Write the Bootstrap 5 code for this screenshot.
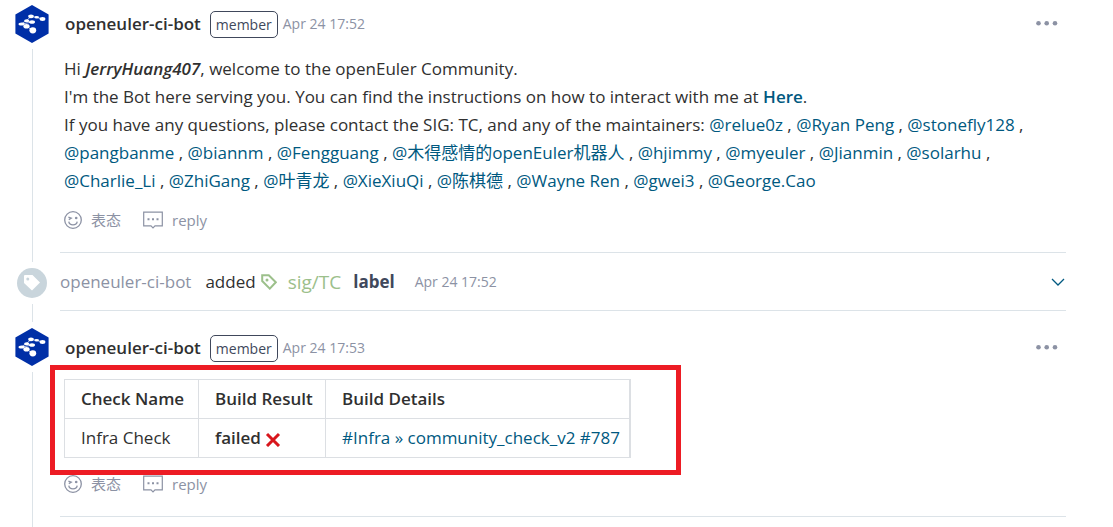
<!DOCTYPE html>
<html lang="en">
<head>
<meta charset="utf-8">
<meta name="viewport" content="width=device-width, initial-scale=1">
<title>Pull request timeline</title>
<link href="https://cdn.jsdelivr.net/npm/bootstrap@5.3.0/dist/css/bootstrap.min.css" rel="stylesheet">
<style>
  :root { --ink: #303030; --slate: #40485b; --muted: #8c92a4; --line: #dce3e8; --link: #005980; }
  body { font-family: "Open Sans", "Noto Sans CJK SC", sans-serif; font-size: 17px; line-height: 28px; color: var(--ink); }
  a { color: var(--link); text-decoration: none; }
  a:hover { text-decoration: underline; }
  .timeline { padding-right: 47px; }
  .rail { width: 60px; padding-left: 4px; gap: 6px; }
  .rail > * { align-self: center; }
  .rail-line { width: 1px; background: var(--line); }
  .rail-lead { height: 11px; }
  .event .rail-lead { height: 9px; }
  .avatar { width: 36px; height: 38px; }
  .event-dot { width: 30px; height: 30px; background: #c9d5dc; color: #fff; }
  .entry { border-bottom: 1px solid var(--line); }
  .comment-body { padding: 23px 0 22px 4px; }
  .comment-first .comment-body { padding-top: 10px; }
  .comment-first .rail { padding-top: 5px; }
  .comment-head { height: 28px; gap: 5px; padding-left: 1px; margin-bottom: 17px; }
  .author { font-weight: 600; color: var(--ink); margin-right: 4px; }
  .role { font-size: 14px; line-height: 25px; padding: 0 5px; border: 1px solid var(--slate); border-radius: 5px; color: var(--slate); }
  .stamp { font-size: 14px; color: var(--muted); }
  .plain-btn { background: none; border: 0; padding: 0; color: var(--muted); font-size: 15px; line-height: 20px; }
  .more-btn { margin-right: 8px; }
  .react-row { gap: 22px; margin-top: 15px; }
  .checked .react-row { margin-top: 16px; }
  .react-row .plain-btn { gap: 9px; }
  .check-wrap { width: fit-content; }
  .check-table { border: 1px solid #dcdfe3; border-right-width: 2px; table-layout: fixed; width: 567px; }
  .check-table th, .check-table td { border: 1px solid #dcdfe3; padding: 5px 0 5px 16px; white-space: nowrap; }
  .check-table th { font-weight: 600; }
  .col-check { width: 134px; }
  .col-result { width: 127px; }
  .highlight-box { position: absolute; inset: -14px -50px -17px -14px; border: 5px solid #ed1c24; pointer-events: none; }
  .event-body { height: 57px; }
  .event-user { color: var(--muted); margin-right: 14px; }
  .event-tag { color: #9cc08b; font-size: 19px; margin: 0 12px 0 5px; gap: 11px; }
  .event strong { color: var(--slate); }
  .event-time { margin-left: 20px; }
</style>
</head>
<body>
<svg class="d-none">
  <symbol id="i-avatar" viewBox="0 0 36 38">
    <path d="M18 0 34.600 9.400V28.600L18 38 1.400 28.600V9.400Z" fill="#002fa7"/>
    <path d="M7 19 12.500 15.500 17 11.500 22.500 12.300 28.500 14M8 19 18 17M12.500 21 18.500 25.500" stroke="#fff" stroke-width=".7" fill="none"/>
    <g fill="#fff"><ellipse cx="17" cy="11.300" rx="2.800" ry="1.900"/><ellipse cx="22.700" cy="12.300" rx="2.300" ry="1.300"/><ellipse cx="28.500" cy="14" rx="2.900" ry="1.900"/><ellipse cx="12.700" cy="15.800" rx="2.600" ry="1.500"/><ellipse cx="7.500" cy="19" rx="3" ry="1.600"/><ellipse cx="18" cy="17" rx="3" ry="1.800"/><ellipse cx="12.500" cy="21.200" rx="3.100" ry="2.300"/><ellipse cx="18.800" cy="25.300" rx="3.400" ry="3.100"/></g>
  </symbol>
  <symbol id="i-smile" viewBox="0 0 18 18">
    <g fill="none" stroke="currentColor" stroke-width="1.300"><circle cx="9" cy="9" r="8.300"/><path d="M4.800 10.600c.6 4.300 7.800 4.300 8.400 0M4.400 6.200 7.200 7.200 4.800 8.600"/></g><circle cx="12.200" cy="7" r="1.300" fill="currentColor"/>
  </symbol>
  <symbol id="i-reply" viewBox="0 0 20 18">
    <path d="M.7 1.200h18.600v13.600H12L10 16.800 8 14.800H.7Z" fill="none" stroke="currentColor" stroke-width="1.200"/><path d="M4.500 7.200h2v2h-2zM9 7.200h2v2H9zM13.500 7.200h2v2h-2z" fill="currentColor"/>
  </symbol>
  <symbol id="i-more" viewBox="0 0 22 6"><g fill="currentColor"><circle cx="2.500" cy="2.300" r="2.300"/><circle cx="10.700" cy="2.300" r="2.300"/><circle cx="19" cy="2.300" r="2.300"/></g></symbol>
</svg>

<main class="timeline">
  <article class="d-flex comment-first">
    <div class="rail d-flex flex-column flex-shrink-0">
      <svg class="avatar flex-shrink-0" role="img" aria-label="openeuler-ci-bot"><use href="#i-avatar"/></svg>
      <div class="rail-line flex-grow-1"></div>
    </div>
    <div class="entry comment-body flex-grow-1">
      <header class="comment-head d-flex align-items-center">
        <a href="#" class="author">openeuler-ci-bot</a>
        <span class="role">member</span>
        <span class="stamp">Apr 24 17:52</span>
        <button class="plain-btn more-btn ms-auto" aria-label="More"><svg class="d-block" width="22" height="6"><use href="#i-more"/></svg></button>
      </header>
      <div class="message">Hi <strong class="fw-semibold fst-italic">JerryHuang407</strong>, welcome to the openEuler Community.<br>
        I'm the Bot here serving you. You can find the instructions on how to interact with me at <a href="#" class="fw-semibold">Here</a>.<br>
        If you have any questions, please contact the SIG: TC, and any of the maintainers: <a href="#">@relue0z</a> , <a href="#">@Ryan Peng</a> , <a href="#">@stonefly128</a> , <a href="#">@pangbanme</a> , <a href="#">@biannm</a> , <a href="#">@Fengguang</a> , <a href="#">@木得感情的openEuler机器人</a> , <a href="#">@hjimmy</a> , <a href="#">@myeuler</a> , <a href="#">@Jianmin</a> , <a href="#">@solarhu</a> , <a href="#">@Charlie_Li</a> , <a href="#">@ZhiGang</a> , <a href="#">@叶青龙</a> , <a href="#">@XieXiuQi</a> , <a href="#">@陈棋德</a> , <a href="#">@Wayne Ren</a> , <a href="#">@gwei3</a> , <a href="#">@George.Cao</a></div>
      <div class="react-row d-flex">
        <button class="plain-btn d-flex align-items-center"><svg width="18" height="18"><use href="#i-smile"/></svg>表态</button>
        <button class="plain-btn d-flex align-items-center"><svg width="20" height="18"><use href="#i-reply"/></svg>reply</button>
      </div>
    </div>
  </article>

  <article class="d-flex event">
    <div class="rail d-flex flex-column flex-shrink-0">
      <div class="rail-line rail-lead"></div>
      <div class="event-dot rounded-circle d-flex align-items-center justify-content-center"><svg width="18" height="18" viewBox="0 0 18 18"><path fill="currentColor" fill-rule="evenodd" d="M2 1h7.500l7.500 7.500-8 8L1 9V2a1 1 0 0 1 1-1Zm2.800 2.400a1.500 1.500 0 1 0 0 3 1.500 1.500 0 0 0 0-3Z"/></svg></div>
      <div class="rail-line flex-grow-1"></div>
    </div>
    <div class="entry flex-grow-1">
      <div class="event-body d-flex align-items-center">
        <a href="#" class="event-user">openeuler-ci-bot</a>
        <span>added</span>
        <a href="#" class="event-tag d-flex align-items-center"><svg width="16" height="16" viewBox="0 0 16 16"><path d="M1.200 1.200h6.600l7 7-6 6.400-7.600-7.600Z" fill="none" stroke="currentColor" stroke-width="2"/><circle cx="6" cy="6" r="1.500" fill="currentColor"/></svg>sig/TC</a>
        <strong class="fw-bold">label</strong>
        <span class="stamp event-time">Apr 24 17:52</span>
        <button class="plain-btn ms-auto" aria-label="Expand"><svg class="d-block" width="16" height="10" viewBox="0 0 16 10"><path d="M2 2 8 8 14 2" fill="none" stroke="#005980" stroke-width="1.300"/></svg></button>
      </div>
    </div>
  </article>

  <article class="d-flex checked">
    <div class="rail d-flex flex-column flex-shrink-0">
      <div class="rail-line rail-lead"></div>
      <svg class="avatar flex-shrink-0" role="img" aria-label="openeuler-ci-bot"><use href="#i-avatar"/></svg>
      <div class="rail-line flex-grow-1"></div>
    </div>
    <div class="entry comment-body flex-grow-1">
      <header class="comment-head d-flex align-items-center">
        <a href="#" class="author">openeuler-ci-bot</a>
        <span class="role">member</span>
        <span class="stamp">Apr 24 17:53</span>
        <button class="plain-btn more-btn ms-auto" aria-label="More"><svg class="d-block" width="22" height="6"><use href="#i-more"/></svg></button>
      </header>
      <div class="check-wrap position-relative">
        <table class="check-table">
          <colgroup><col class="col-check"><col class="col-result"><col></colgroup>
          <thead><tr><th>Check Name</th><th>Build Result</th><th>Build Details</th></tr></thead>
          <tbody><tr><td>Infra Check</td><td class="fw-semibold">failed <svg width="16" height="16" viewBox="0 0 16 16"><path d="M2 3 14 15M14 3 2 15" stroke="#d8161c" stroke-width="3"/></svg></td><td><a href="#">#Infra » community_check_v2 #787</a></td></tr></tbody>
        </table>
        <div class="highlight-box"></div>
      </div>
      <div class="react-row d-flex">
        <button class="plain-btn d-flex align-items-center"><svg width="18" height="18"><use href="#i-smile"/></svg>表态</button>
        <button class="plain-btn d-flex align-items-center"><svg width="20" height="18"><use href="#i-reply"/></svg>reply</button>
      </div>
    </div>
  </article>
  <div class="d-flex"><div class="rail d-flex flex-column"><div class="rail-line rail-lead"></div></div></div>
</main>
<script src="https://cdn.jsdelivr.net/npm/bootstrap@5.3.0/dist/js/bootstrap.bundle.min.js"></script>
</body>
</html>
